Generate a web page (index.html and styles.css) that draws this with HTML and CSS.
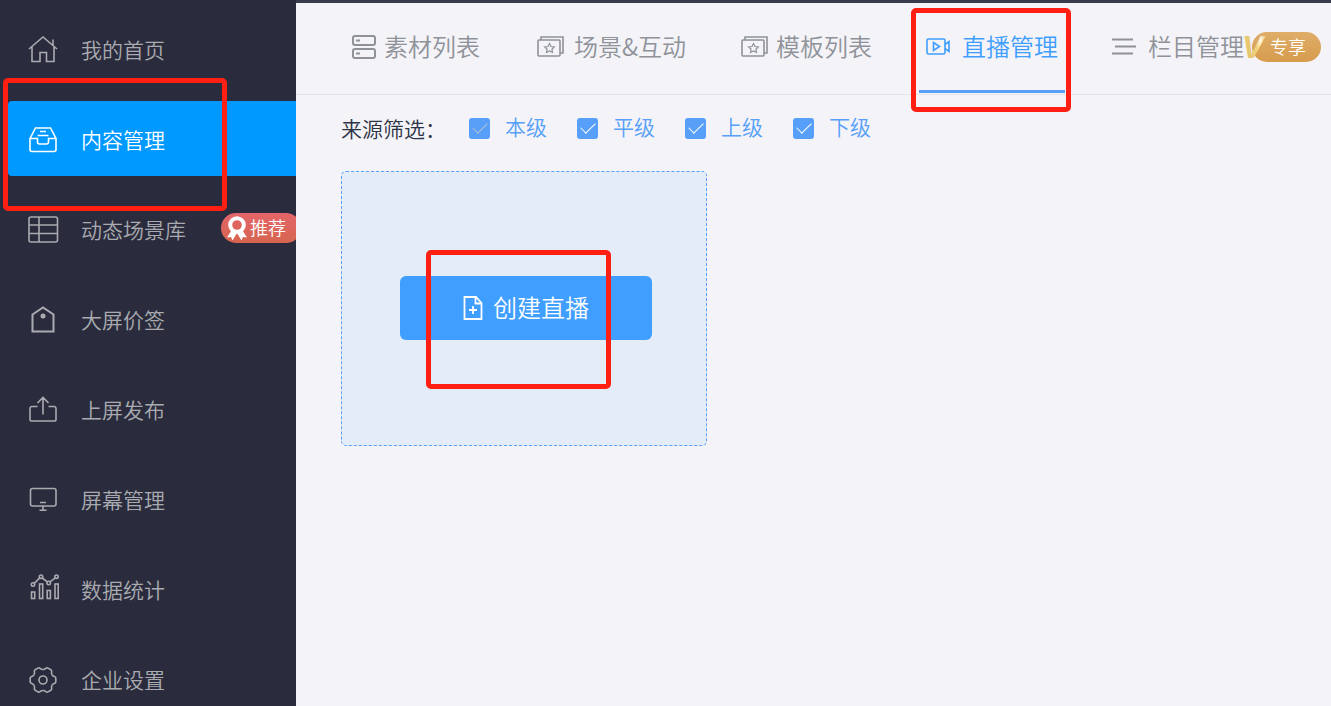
FILE: index.html
```html
<!DOCTYPE html>
<html lang="zh-CN">
<head>
<meta charset="utf-8">
<title>直播管理</title>
<link rel="stylesheet" href="styles.css">
</head>
<body>
<div class="app">
  <nav class="sidebar" aria-label="主导航">
    <a class="item" href="#"><svg class="ico" viewBox="0 0 30 30"><path d="M1 14 15 2l14 12M25 10V4.500M4 12v14.500h8V17.500h6.500v9H26V12"/></svg><span>我的首页</span></a>
    <a class="item active" href="#" aria-current="page"><svg class="ico" viewBox="0 0 30 30"><path d="M2 13.500 7.500 3h15L28 13.500v11a2 2 0 0 1-2 2H4a2 2 0 0 1-2-2zM2 13.500h7.500v3.500a2 2 0 0 0 2 2h7a2 2 0 0 0 2-2v-3.500H28M12 6.500h6M9.500 10.500h11"/></svg><span>内容管理</span><i class="mark mark-item"></i></a>
    <a class="item" href="#"><svg class="ico" viewBox="0 0 30 30"><rect x="1" y="2" width="28.500" height="25" rx="2"/><path d="M1 10h28M1 18.500h28M11 2v25"/></svg><span>动态场景库</span><b class="hot"><svg class="medal" viewBox="0 0 20 24"><circle cx="10" cy="9" r="6.800"/><path d="m4.500 14.500-4.500 7 4-.5 1.500 3.500 4.500-7.500zM15.500 14.500l4.500 7-4-.5-1.500 3.500-4.500-7.500z"/></svg>推荐</b></a>
    <a class="item" href="#"><svg class="ico thick" viewBox="0 0 30 30"><path d="M4.500 9.500 15 2.500l10.500 7V26.500h-21z"/><circle class="dot" cx="15" cy="11" r="2.500"/></svg><span>大屏价签</span></a>
    <a class="item" href="#"><svg class="ico" viewBox="0 0 30 30"><path d="M9.500 11.500H3.500a2 2 0 0 0-1.500 2v11a1.500 1.500 0 0 0 1.500 1.500h23a1.500 1.500 0 0 0 1.500-1.500v-11a2 2 0 0 0-1.500-2h-6M15 19.500V2.500M9.500 8 15 2.500 20.500 8"/></svg><span>上屏发布</span></a>
    <a class="item" href="#"><svg class="ico" viewBox="0 0 30 30"><rect x="2.500" y="3.500" width="25.500" height="17.500" rx="2"/><path d="M12 17.500h6M15 21v4M11.500 25.200h7"/></svg><span>屏幕管理</span></a>
    <a class="item" href="#"><svg class="ico" viewBox="0 0 30 30"><rect x="3.500" y="17" width="3.200" height="6.500"/><rect x="11.500" y="9" width="3.200" height="14.500"/><rect x="19.200" y="15.500" width="3.200" height="8"/><rect x="27" y="9" width="3.200" height="14.500"/><circle cx="5" cy="9.500" r="1.700"/><circle cx="13" cy="1.700" r="1.700"/><circle cx="20.700" cy="8" r="1.700"/><circle cx="28.500" cy="1.700" r="1.700"/><path d="m6.200 8.300 5.600-5.400M14.200 3l5.200 3.900M22 6.800l5.300-4"/></svg><span>数据统计</span></a>
    <a class="item" href="#"><svg class="ico" viewBox="-15 -15 30 30"><defs><path id="tooth" d="M0-10.500Q1.800-10.500 2.700-11.500Q3.600-12.500 5-11.900L7.800-10.300Q9-9.500 8.600-8Q8.200-6.500 9.100-5.250"/></defs><use href="#tooth"/><use href="#tooth" transform="rotate(60)"/><use href="#tooth" transform="rotate(120)"/><use href="#tooth" transform="rotate(180)"/><use href="#tooth" transform="rotate(240)"/><use href="#tooth" transform="rotate(300)"/><circle r="4"/></svg><span>企业设置</span></a>
  </nav>
  <main class="main">
    <nav class="tabs" aria-label="内容">
      <a class="tab" href="#"><svg class="tico slim" viewBox="0 0 24 28"><rect x="1" y="3" width="22" height="9" rx="2"/><rect x="1" y="16" width="22" height="9" rx="2"/><path d="M4 7.500h4M4 20.500h4"/></svg>素材列表</a>
      <a class="tab" href="#"><svg class="tico wide fine" viewBox="-3 0 32 28"><path d="M4 7V4h22v16h-3"/><rect x="1" y="7" width="22" height="16" rx="1"/><path class="star" d="m12.500 10.500 1.500 3 3.300.4-2.400 2.300.6 3.300-3-1.600-3 1.600.6-3.300-2.400-2.300 3.300-.4z"/></svg>场景&amp;互动</a>
      <a class="tab" href="#"><svg class="tico fine" viewBox="-1 0 28 28"><path d="M4 7V4h22v16h-3"/><rect x="1" y="7" width="22" height="16" rx="1"/><path class="star" d="m12.500 10.500 1.500 3 3.300.4-2.400 2.300.6 3.300-3-1.600-3 1.600.6-3.300-2.400-2.300 3.300-.4z"/></svg>模板列表</a>
      <a class="tab current" href="#" aria-current="page"><svg class="tico fine" viewBox="0 0 28 28"><rect x="1" y="6" width="18" height="15" rx="1.500"/><path d="M7.500 9.500v8l6-4zM19 11.500l4-3v10l-4-3"/></svg>直播管理<i class="mark mark-tab"></i></a>
      <a class="tab" href="#"><svg class="tico" viewBox="0 0 28 28"><path class="bars" d="M0 6.500h21M3 13.500h21M0 20.500h21"/></svg>栏目管理<b class="vip"><svg class="vmark" viewBox="0 0 40 36"><defs><linearGradient id="gold" x1="0" y1="0.300" x2="1" y2="0"><stop offset="0" stop-color="#e3c06a"/><stop offset=".5" stop-color="#efd27c"/><stop offset=".7" stop-color="#fff6e0"/><stop offset="1" stop-color="#e8bd72"/></linearGradient></defs><text x="2" y="28">V</text></svg>专享</b></a>
    </nav>
    <section class="content">
      <div class="filters">
        <span class="title">来源筛选：</span>
        <label class="check"><input type="checkbox" checked disabled>本级</label>
        <label class="check"><input type="checkbox" checked>平级</label>
        <label class="check"><input type="checkbox" checked>上级</label>
        <label class="check"><input type="checkbox" checked>下级</label>
      </div>
      <div class="card">
        <button class="create" type="button"><svg class="file" viewBox="0 0 20 24"><path d="M1.500 1h11.500l5.500 6v16h-17zM12.500 1v6.500h6M10 10v8M6 14h8"/></svg><span>创建直播</span><i class="mark mark-button"></i></button>
      </div>
    </section>
  </main>
</div>
</body>
</html>
```
FILE: styles.css
```css
* { box-sizing: border-box; }

body {
  margin: 0;
  font-family: "Noto Sans CJK SC DemiLight", "Noto Sans CJK SC", sans-serif;
  font-weight: 350;
  background: #f3f3f8;
}

a { color: inherit; text-decoration: none; }
svg { flex: none; fill: none; stroke: currentColor; }

.app { display: flex; height: 100vh; overflow: hidden; }

.sidebar {
  flex: 0 0 296px;
  display: flex;
  flex-direction: column;
  gap: 15px;
  padding: 11px 0 0 8px;
  overflow: hidden;
  background: #2a2c3d;
  color: #a9abb0;
}

.item {
  position: relative;
  flex: none;
  display: flex;
  align-items: center;
  height: 75px;
  padding: 3px 0 0 20px;
  border-radius: 4px 0 0 4px;
  font-size: 21px;
  line-height: 30px;
  white-space: nowrap;
}
.item span { padding-bottom: 3px; }
.item.active { background: #0099ff; color: #fff; }

.ico {
  width: 30px;
  height: 30px;
  margin-right: 23px;
  stroke-width: 1.6;
  overflow: visible;
}
.thick { stroke-width: 2; }
.dot { fill: currentColor; stroke: none; }

.hot {
  flex: none;
  display: flex;
  align-items: center;
  gap: 3px;
  width: 80px;
  height: 30px;
  margin: 0 0 4px 35px;
  padding: 0 0 2px 6px;
  border-radius: 15px;
  background: linear-gradient(#e4656a, #d6654f);
  color: #fff;
  font-size: 18px;
  font-weight: 400;
}
.medal { width: 20px; height: 24px; margin-top: 2px; stroke-width: 4; }
.medal path { fill: #fff; stroke: none; }

.main {
  flex: 1;
  min-width: 0;
  border-top: 3px solid #393b4d;
}

.tabs {
  display: flex;
  gap: 40px;
  height: 92px;
  padding: 0 0 1px 49px;
  border-bottom: 1px solid #e3e4e8;
  color: #8f9298;
}
.tab {
  position: relative;
  flex: none;
  display: flex;
  align-items: center;
  gap: 8px;
  padding: 0 7px 1px;
  border-bottom: 3px solid transparent;
  font-size: 24px;
  line-height: 36px;
  white-space: nowrap;
}
.tab.current { border-bottom-color: #579ff8; color: #409eff; }

.tico { width: 28px; height: 28px; margin-top: 2px; stroke-width: 2; }
.tico.slim { width: 24px; }
.tico.wide { width: 32px; }
.tico.fine { stroke-width: 1.6; }
.tico .star { stroke-width: 1.2; }
.bars { stroke-width: 1.8; }

.vip {
  position: relative;
  display: flex;
  align-items: center;
  height: 30px;
  margin-top: 2px;
  padding: 0 15px 2px 18px;
  border-radius: 15px;
  background: linear-gradient(#dfae69, #d69b4d);
  color: #fff;
  font-size: 18px;
  font-weight: 400;
}
.vmark {
  position: absolute;
  left: -12px;
  top: -2px;
  width: 40px;
  height: 36px;
  overflow: visible;
}
.vmark text {
  font: italic bold 32px "Liberation Sans", sans-serif;
  fill: url(#gold);
  stroke: none;
}

.content { padding: 17px 45px; }

.filters {
  display: flex;
  align-items: center;
  height: 32px;
  font-size: 21px;
  line-height: 32px;
}
.title { width: 128px; color: #2c3445; }
.check {
  display: flex;
  align-items: center;
  gap: 15px;
  margin-right: 30px;
  padding-bottom: 4px;
  color: #579ff8;
}
.check input {
  appearance: none;
  width: 21px;
  height: 21px;
  margin: 4px 0 0;
  border-radius: 3px;
  background: #579ff8;
  display: grid;
  place-items: center;
  color: #fff;
}
.check input::before {
  content: "";
  width: 13px;
  height: 7px;
  border: solid currentColor;
  border-width: 0 0 1px 1px;
  transform: translateY(-2px) rotate(-45deg);
}
.check input:disabled { color: #b4bfd0; }

.card {
  display: flex;
  align-items: center;
  justify-content: center;
  width: 366px;
  height: 275px;
  margin-top: 27px;
  padding: 0 0 2px 4px;
  border: 1px dashed #579ff8;
  border-radius: 5px;
  background: #e4ecf7;
}
.create {
  position: relative;
  display: flex;
  align-items: center;
  justify-content: center;
  gap: 10px;
  width: 252px;
  height: 64px;
  padding: 0;
  border: 0;
  border-radius: 6px;
  background: #409eff;
  color: #fff;
  font: inherit;
  font-size: 24px;
}
.create span { padding-bottom: 2px; }
.file { width: 20px; height: 24px; stroke-width: 1.8; }

.mark {
  position: absolute;
  z-index: 1;
  border: 5px solid #ff2013;
  border-radius: 5px;
  pointer-events: none;
}
.mark-item { left: -5px; top: -23px; width: 224px; height: 133px; }
.mark-tab { left: -8px; top: 5px; width: 160px; height: 104px; }
.mark-button { left: 26px; top: -26px; width: 185px; height: 139px; }
```
